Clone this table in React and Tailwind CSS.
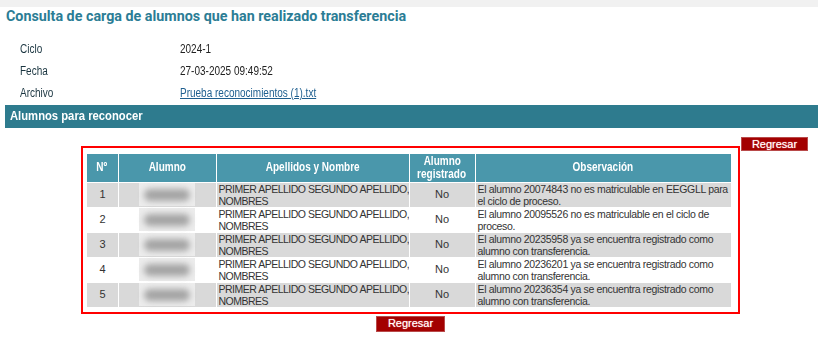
const rows = [
  { n: 1, obs: ["El alumno 20074843 no es matriculable en EEGGLL para", "el ciclo de proceso."] },
  { n: 2, obs: ["El alumno 20095526 no es matriculable en el ciclo de", "proceso."] },
  { n: 3, obs: ["El alumno 20235958 ya se encuentra registrado como", "alumno con transferencia."] },
  { n: 4, obs: ["El alumno 20236201 ya se encuentra registrado como", "alumno con transferencia."] },
  { n: 5, obs: ["El alumno 20236354 ya se encuentra registrado como", "alumno con transferencia."] },
];

// condensed look: no narrow face installed, so squeeze Liberation Sans
const Narrow = ({ children, className = "" }) => (
  <span className={`inline-block whitespace-nowrap scale-x-[0.8] ${className}`}>{children}</span>
);

const RegresarButton = ({ className }) => (
  <button
    className={`bg-[#a30000] border border-[#b94a4a] text-white text-[11px] leading-none ${className}`}
    style={{ textShadow: "0 0 1px #ffb0b0" }}
  >
    Regresar
  </button>
);

const Blurred = () => (
  <div className="mx-auto w-[56px] h-[23px] bg-[#ececec] flex items-center justify-center">
    <div className="w-[46px] h-[12px] rounded-full bg-[#a4a4a4] blur-[3px]" />
  </div>
);

const Lines = ({ lines }) => (
  <div className="whitespace-nowrap">
    {lines.map((l) => (
      <div key={l}>{l}</div>
    ))}
  </div>
);

export default function App() {
  return (
    <div className="w-[818px] h-[338px] bg-white overflow-hidden" style={{ fontFamily: '"Liberation Sans", Arial, sans-serif' }}>
      <div className="h-[7px] bg-[#f1f1f1]" />
      <h1
        className="ml-[6px] mt-[1px] text-[14.3px] leading-[17px] font-bold text-[#2b7d95]"
        style={{ fontFamily: 'Roboto, "Liberation Sans", sans-serif' }}
      >
        Consulta de carga de alumnos que han realizado transferencia
      </h1>

      <div className="mt-[13px] text-[12.5px] text-[#222]">
        {[
          ["Ciclo", "2024-1"],
          ["Fecha", "27-03-2025 09:49:52"],
          ["Archivo", "Prueba reconocimientos (1).txt"],
        ].map(([label, value], i) => (
          <div key={label} className="flex h-[22px] items-center">
            <span className="ml-[20px] w-[160px] text-[#1a3540]">
              <Narrow className="origin-left">{label}</Narrow>
            </span>
            <Narrow className="origin-left">
              {i === 2 ? <a href="#" className="text-[#1f5f8f] underline">{value}</a> : value}
            </Narrow>
          </div>
        ))}
      </div>

      <div className="ml-[5px] mt-[1px] h-[23px] bg-[#2e7b8e] text-white text-[12.5px] font-bold pl-[5px] pt-[2px]">
        <Narrow className="origin-left scale-x-[0.9]">Alumnos para reconocer</Narrow>
      </div>

      <div className="flex justify-end pr-[10px] mt-[9px]">
        <RegresarButton className="w-[67px] h-[14px]" />
      </div>

      <div className="ml-[81px] -mt-[5px] w-[659px] border-2 border-[#ff0000] pl-[4px] pr-[7px] pt-[6px] pb-[4px]">
        <table className="w-[644px] border-collapse table-fixed text-[10.5px] text-[#333] tracking-[-0.5px]">
          <colgroup>
            <col className="w-[31px]" />
            <col className="w-[98px]" />
            <col className="w-[193px]" />
            <col className="w-[66px]" />
            <col className="w-[256px]" />
          </colgroup>
          <thead>
            <tr className="bg-[#4a97ab] text-white text-[12.5px] font-bold h-[28px] tracking-normal">
              <th className="border border-white border-t-0 border-l-0"><Narrow>Nº</Narrow></th>
              <th className="border border-white border-t-0"><Narrow>Alumno</Narrow></th>
              <th className="border border-white border-t-0"><Narrow>Apellidos y Nombre</Narrow></th>
              <th className="border border-white border-t-0 leading-[13px]">
                <Narrow>Alumno</Narrow><br /><Narrow>registrado</Narrow>
              </th>
              <th className="border border-white border-t-0 border-r-0"><Narrow>Observación</Narrow></th>
            </tr>
          </thead>
          <tbody>
            {rows.map((r) => (
              <tr key={r.n} className={`h-[24px] ${r.n % 2 ? "bg-[#d9d9d9]" : "bg-white"}`}>
                <td className="border border-white border-l-0 text-center text-[11px]">{r.n}</td>
                <td className="border border-white p-0"><Blurred /></td>
                <td className="border border-white pl-[2px] leading-[12px] overflow-hidden">
                  <Lines lines={["PRIMER APELLIDO SEGUNDO APELLIDO,", "NOMBRES"]} />
                </td>
                <td className="border border-white text-center text-[11px] tracking-normal">No</td>
                <td className="border border-white border-r-0 pl-[2px] leading-[12px] tracking-[-0.33px]">
                  <Lines lines={r.obs} />
                </td>
              </tr>
            ))}
          </tbody>
        </table>
      </div>

      <div className="ml-[81px] w-[659px] flex justify-center mt-[2px]">
        <RegresarButton className="w-[69px] h-[16px]" />
      </div>
    </div>
  );
}
